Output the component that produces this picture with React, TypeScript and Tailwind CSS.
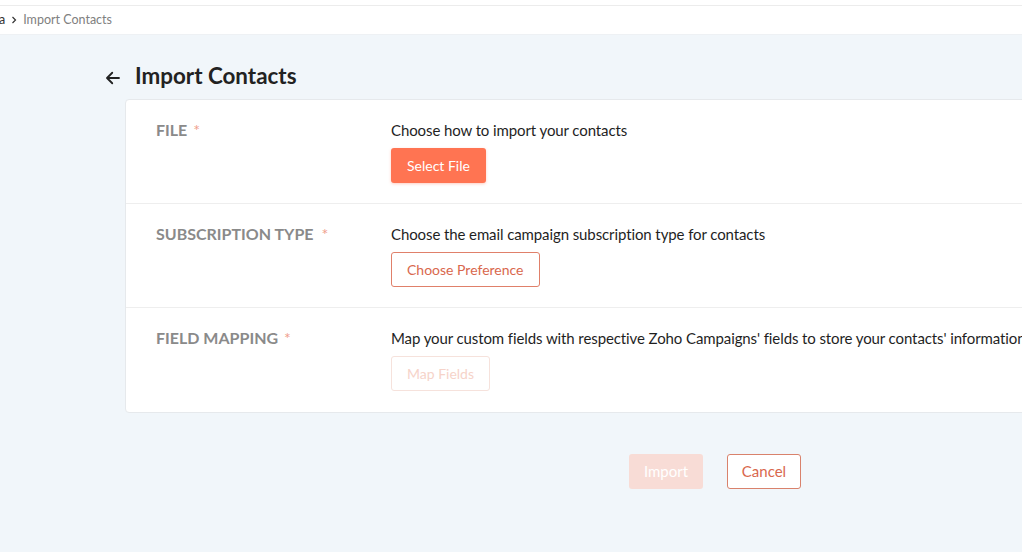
import React from 'react';

const rows = [
  {
    label: 'FILE',
    gap: 'ml-1.5',
    text: 'Choose how to import your contacts',
    button: 'Select File',
    kind: 'solid',
  },
  {
    label: 'SUBSCRIPTION TYPE',
    gap: 'ml-2',
    text: 'Choose the email campaign subscription type for contacts',
    button: 'Choose Preference',
    kind: 'outline',
  },
  {
    label: 'FIELD MAPPING',
    gap: 'ml-1.5',
    text: "Map your custom fields with respective Zoho Campaigns' fields to store your contacts' information.",
    button: 'Map Fields',
    kind: 'disabled',
  },
];

function BackArrow() {
  return (
    <svg width="18" height="18" viewBox="0 0 24 24" fill="none" stroke="#222" strokeWidth="2.4" strokeLinecap="round" strokeLinejoin="round">
      <path d="M20 12H5" />
      <path d="M11 5l-7 7 7 7" />
    </svg>
  );
}

export default function App() {
  return (
    <div className="w-[1022px] h-[552px] overflow-hidden bg-[#f1f6fa] font-['Lato',sans-serif]">
      {/* Top header */}
      <div className="bg-white">
        <div className="h-[6px] border-b border-[#ececec]" />
        <div className="h-[29px] flex items-center text-[12.5px] text-[#808080] border-b border-[#eef1f4]">
          <span className="text-[#333] -ml-[1px]">a</span>
          <svg className="mx-[5px]" width="8" height="8" viewBox="0 0 8 8" fill="none" stroke="#333" strokeWidth="1.2">
            <path d="M2.5 1l3 3-3 3" />
          </svg>
          <span>Import Contacts</span>
        </div>
      </div>

      {/* Title */}
      <div className="flex items-center pl-[104px] pt-[18px] h-[64px]">
        <span className="mt-[4px]">
          <BackArrow />
        </span>
        <h1 className="ml-[13px] text-[22.4px] font-bold text-[#222]">Import Contacts</h1>
      </div>

      {/* Card */}
      <div className="ml-[125px] w-[960px] bg-white border border-[#e6e9ec] rounded-[4px]">
        {rows.map((r, i) => (
          <div
            key={r.label}
            className={`flex h-[104px] pt-[20px] ${i < rows.length - 1 ? 'border-b border-[#eeeeee]' : 'h-[103px]'}`}
          >
            <div className="w-[265px] pl-[30px] text-[16px] font-bold text-[#8a8a8a] leading-[20px]">
              {r.label}
              <span className={`${r.gap} text-[#f0a08c] font-normal`}>*</span>
            </div>
            <div className="flex-1 min-w-0">
              <p className="text-[15px] tracking-[-0.1px] text-[#1f1f1f] leading-[20px] whitespace-nowrap">{r.text}</p>
              <button
                className={
                  r.kind === 'solid'
                    ? 'mt-[8px] h-[35px] px-[16px] rounded-[3px] bg-[#ff7452] text-white text-[14px] shadow-[0_1px_3px_rgba(255,116,82,0.35)]'
                    : r.kind === 'outline'
                    ? 'mt-[8px] h-[35px] px-[15px] rounded-[3px] border border-[#e0806a] text-[#d9684d] text-[14px] bg-white'
                    : 'mt-[8px] h-[35px] px-[15px] rounded-[3px] border border-[#f6e2dc] text-[#f6d3c9] text-[14px] bg-white'
                }
              >
                {r.button}
              </button>
            </div>
          </div>
        ))}
      </div>

      {/* Actions */}
      <div className="flex pl-[629px] pt-[41px] gap-[24px]">
        <button className="h-[35px] w-[74px] rounded-[3px] bg-[#f8dcd6] text-white text-[15px]">Import</button>
        <button className="h-[35px] w-[74px] rounded-[3px] border border-[#d9826c] bg-white text-[#d9684d] text-[15px]">Cancel</button>
      </div>
    </div>
  );
}
